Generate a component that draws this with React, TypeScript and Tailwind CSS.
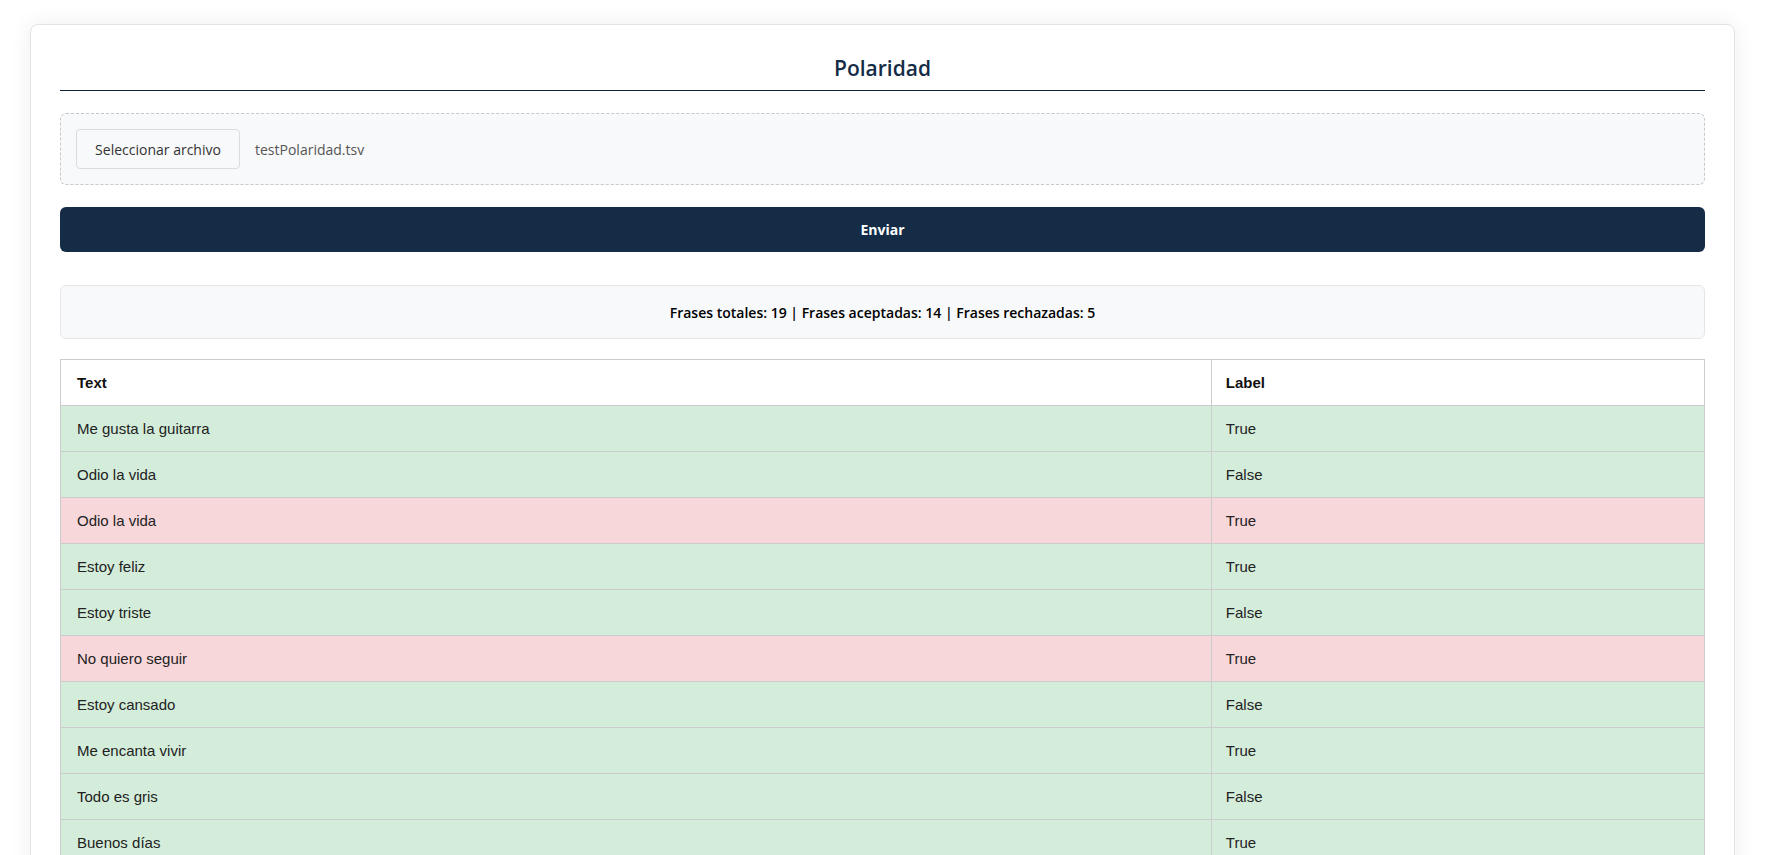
import React from 'react';

type Row = { text: string; label: string; ok: boolean };

const ROWS: Row[] = [
  { text: 'Me gusta la guitarra', label: 'True', ok: true },
  { text: 'Odio la vida', label: 'False', ok: true },
  { text: 'Odio la vida', label: 'True', ok: false },
  { text: 'Estoy feliz', label: 'True', ok: true },
  { text: 'Estoy triste', label: 'False', ok: true },
  { text: 'No quiero seguir', label: 'True', ok: false },
  { text: 'Estoy cansado', label: 'False', ok: true },
  { text: 'Me encanta vivir', label: 'True', ok: true },
  { text: 'Todo es gris', label: 'False', ok: true },
  { text: 'Buenos días', label: 'True', ok: true },
  { text: 'Qué día tan bonito', label: 'True', ok: true },
  { text: 'No me gusta nada', label: 'False', ok: true },
];

const ui = "font-['Open_Sans',_'Noto_Sans',_sans-serif]";

const App: React.FC = () => {
  const total = 19;
  const accepted = 14;
  const rejected = total - accepted;

  return (
    <div className="min-h-screen bg-white pt-[24px] pb-10">
      <div className="ml-[30px] w-[1705px] bg-white border border-[#e2e2e8] rounded-[8px] shadow-[0_0_22px_rgba(0,0,0,0.07)] px-[29px] pt-[28px] pb-8">
        {/* Title */}
        <h1 className={`${ui} text-center text-[21px] font-semibold text-[#142c46] leading-[30px] pb-[7px] border-b border-[#0f2238]`}>
          Polaridad
        </h1>

        {/* File picker */}
        <div className="mt-[22px] h-[72px] bg-[#f8f9fa] border border-dashed border-[#c9c9c9] rounded-[6px] flex items-center px-[15px]">
          <button className={`${ui} h-[40px] w-[164px] bg-[#f8f9fa] border border-[#dcdcdc] rounded-[4px] text-[14px] font-medium text-[#333]`}>
            Seleccionar archivo
          </button>
          <span className={`${ui} ml-[15px] text-[14px] text-[#555]`}>testPolaridad.tsv</span>
        </div>

        {/* Submit */}
        <button className={`${ui} mt-[22px] w-full h-[45px] bg-[#142c46] rounded-[6px] text-white text-[14px] font-bold`}>
          Enviar
        </button>

        {/* Stats */}
        <div className={`${ui} mt-[33px] h-[54px] bg-[#f8f9fa] border border-[#e6e6ea] rounded-[6px] flex items-center justify-center text-[14px] font-semibold text-black`}>
          Frases totales: {total} | Frases aceptadas: {accepted} | Frases rechazadas: {rejected}
        </div>

        {/* Results table */}
        <table className="mt-[20px] w-full border-collapse border border-[#cccccc] font-['Liberation_Sans',_Arial,_sans-serif] text-[15px] text-[#222]">
          <thead>
            <tr className="bg-white">
              <th className="w-[70%] h-[46px] px-[16px] pt-[2px] text-left font-bold text-[#111] border border-[#cccccc]">Text</th>
              <th className="w-[30%] h-[46px] px-[14px] pt-[2px] text-left font-bold text-[#111] border border-[#cccccc]">Label</th>
            </tr>
          </thead>
          <tbody>
            {ROWS.map((r, i) => (
              <tr key={i} className={r.ok ? 'bg-[#d4edda]' : 'bg-[#f8d7da]'}>
                <td className="h-[46px] px-[16px] pt-[2px] border border-[#cccccc]">{r.text}</td>
                <td className="h-[46px] px-[14px] pt-[2px] border border-[#cccccc]">{r.label}</td>
              </tr>
            ))}
          </tbody>
        </table>
      </div>
    </div>
  );
};

export default App;
